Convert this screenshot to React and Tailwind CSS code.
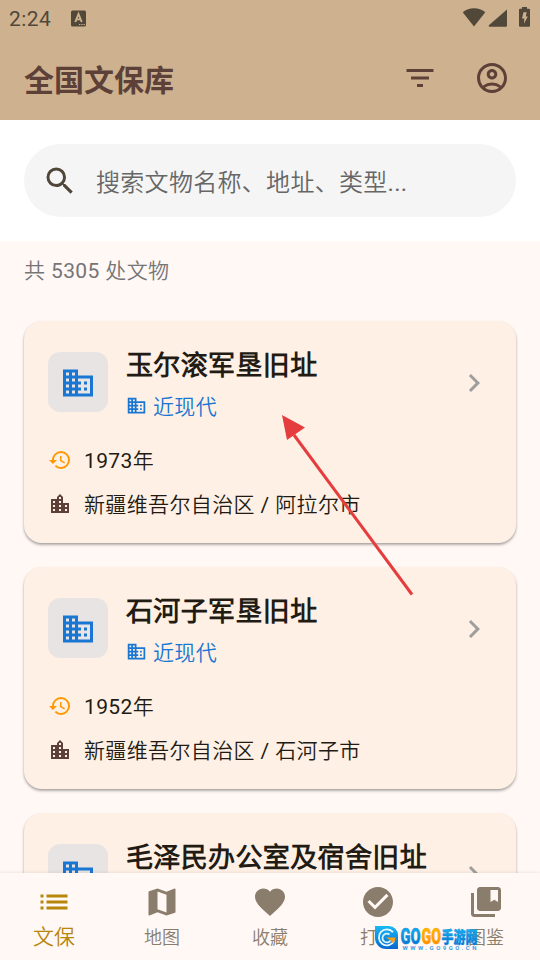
import {
  MdBusiness,
  MdCheckCircle,
  MdChevronRight,
  MdCollectionsBookmark,
  MdFavorite,
  MdFilterList,
  MdHistory,
  MdList,
  MdLocationCity,
  MdMap,
  MdOutlineAccountCircle,
  MdSearch,
} from "react-icons/md";

const sites = [
  { name: "玉尔滚军垦旧址", era: "近现代", year: "1973年", place: "新疆维吾尔自治区 / 阿拉尔市" },
  { name: "石河子军垦旧址", era: "近现代", year: "1952年", place: "新疆维吾尔自治区 / 石河子市" },
  { name: "毛泽民办公室及宿舍旧址" },
];

const tabs = [
  { label: "文保", Icon: MdList, active: true },
  { label: "地图", Icon: MdMap },
  { label: "收藏", Icon: MdFavorite },
  { label: "打卡", Icon: MdCheckCircle },
  { label: "图鉴", Icon: MdCollectionsBookmark },
];

function StatusBar() {
  return (
    <div className="flex h-9 items-center justify-between pl-[9px] pr-2.5 text-[#51483a]">
      <div className="flex items-center gap-5">
        <span className="pt-px text-[21px] leading-9 tracking-[0.4px]">2:24</span>
        <svg width="15" height="17" viewBox="0 0 15 17">
          <rect y="0.5" width="15" height="16" rx="1.5" fill="currentColor" />
          <path d="M4.3 12 7.5 4l3.2 8M5.5 9.4h4" fill="none" stroke="#ceb28f" strokeWidth="1.9" />
          <path d="M8 14.5h1.3M10.3 14.5h1.3M12.6 14.5h1.3" stroke="#ceb28f" strokeWidth="1.2" />
        </svg>
      </div>
      <svg className="-mt-0.5" width="68" height="21" viewBox="0 0 68 21" fill="currentColor">
        <path d="M0.7 5.2C4 2.5 7.6 1.2 12 1.2s8 1.3 11.3 4L12 19.5z" />
        <path d="M45 2.5v16.2a1 1 0 0 1-1 1H27.6c-.9 0-1.2-.8-.7-1.4z" />
        <path d="M60 0h5v1.8h2a1 1 0 0 1 1 1v16a1 1 0 0 1-1 1h-9a1 1 0 0 1-1-1v-16a1 1 0 0 1 1-1h2z" />
        <path d="M61.5 5.3h3.2l-1 4.3h2.1l-3.9 7.2.5-5.3H60z" fill="#ceb28f" />
      </svg>
    </div>
  );
}

function SiteCard({ site }) {
  return (
    <div className="h-[222px] shrink-0 rounded-[18px] bg-[#fff0e5] p-6 shadow-[0_2px_3px_rgba(0,0,0,0.28),0_1px_2px_rgba(0,0,0,0.1)]">
      <div className="flex h-[75px] items-center">
        <div className="-mt-px flex size-[60px] items-center justify-center rounded-xl bg-[#e8e4e3] text-[#1976d2]">
          <MdBusiness size={36} className="mt-0.5" />
        </div>
        <div className="ml-[18px] flex-1 pt-1">
          <div className="text-[27px] font-bold leading-[38px] tracking-[0.375px] text-[#211b13]">{site.name}</div>
          <div className="mt-[7px] flex h-[30px] items-center gap-1.5 text-[#1976d2]">
            {site.era && (
              <>
                <MdBusiness size={21} className="-mt-1" />
                <span className="text-[21px] leading-[30px] tracking-[0.375px]">{site.era}</span>
              </>
            )}
          </div>
        </div>
        <MdChevronRight size={36} className="text-[#9e9e9e]" />
      </div>
      {site.year && (
        <>
          <div className="mt-[25px] flex h-[30px] items-center gap-3">
            <MdHistory size={24} className="text-[#ff9800]" />
            <span className="pt-0.5 text-[21px] leading-[30px] tracking-[0.375px] text-[#211b13]">{site.year}</span>
          </div>
          <div className="mt-3.5 flex h-[30px] items-center gap-3">
            <MdLocationCity size={24} className="-mt-px text-[#5d4037]" />
            <span className="pt-0.5 text-[21px] leading-[30px] tracking-[0.375px] text-[#211b13]">{site.place}</span>
          </div>
        </>
      )}
    </div>
  );
}

function Watermark() {
  return (
    <svg width="106" height="27" viewBox="0 0 106 27">
      <defs>
        <linearGradient id="wm-blue" x1="0" y1="0" x2="0" y2="1">
          <stop offset="0" stopColor="#18b9f2" />
          <stop offset="1" stopColor="#0868cf" />
        </linearGradient>
        <linearGradient id="wm-gold" x1="0" y1="0" x2="0" y2="1">
          <stop offset="0" stopColor="#ffc400" />
          <stop offset="1" stopColor="#ff8500" />
        </linearGradient>
      </defs>
      <path d="M1 1h14a9 9 0 0 1 9 9v14H12A11 11 0 0 1 1 13z" fill="url(#wm-blue)" />
      <path d="M19 7.2A8 8 0 1 0 20 16" fill="none" stroke="#eafaff" strokeWidth="1.8" />
      <path d="M15.5 9.5a4.4 4.4 0 1 0 1 6" fill="none" stroke="#d5f3ff" strokeWidth="1.8" />
      <path d="M12 12.5h9.5c0 2.5-1 4.5-3 5.5l-2-2.7z" fill="#ff9d13" />
      <g className="font-[Roboto,'Noto_Sans_CJK_SC',sans-serif] font-black" strokeWidth="0.5">
        <text x="26.5" y="18.5" fontSize="22" textLength="20" lengthAdjust="spacingAndGlyphs" fill="url(#wm-blue)" stroke="#0b8fe0">GO</text>
        <text x="47.5" y="18.5" fontSize="22" textLength="19.5" lengthAdjust="spacingAndGlyphs" fill="url(#wm-gold)" stroke="#ffa000">GO</text>
        <text x="67.5" y="17.5" fontSize="16" textLength="36" lengthAdjust="spacingAndGlyphs" fill="url(#wm-blue)" stroke="#0b8fe0">手游网</text>
      </g>
      <text x="28.5" y="24.8" fontSize="6" textLength="74" className="font-[Roboto,sans-serif] font-bold" fill="#3c9ee5">WWW.GO9GO.CN</text>
    </svg>
  );
}

export default function App() {
  return (
    <div className="relative flex h-[960px] w-[540px] flex-col overflow-hidden bg-[#fff8f5] font-[Roboto,'Noto_Sans_CJK_SC_DemiLight','Noto_Sans_CJK_SC_Light','Noto_Sans_CJK_SC',sans-serif]">
      <header className="h-[120px] shrink-0 bg-[#ceb28f]">
        <StatusBar />
        <div className="flex h-[84px] items-center pl-6 pr-[30px] text-[#5d4037]">
          <h1 className="flex-1 pt-1.5 font-[Roboto,'Noto_Sans_CJK_SC',sans-serif] text-[30px] font-bold leading-10">全国文保库</h1>
          <MdFilterList size={36} className="mr-9" />
          <MdOutlineAccountCircle size={36} />
        </div>
      </header>

      <div className="h-[121px] shrink-0 bg-white px-6 pt-6">
        <div className="flex h-[73px] items-center rounded-full bg-[#f5f5f5] pl-[18px]">
          <MdSearch size={36} className="text-[#4f4539]" />
          <span className="ml-[18px] pt-[5px] text-[24px] leading-9 tracking-[0.3px] text-[#666]">搜索文物名称、地址、类型...</span>
        </div>
      </div>

      <main className="flex min-h-0 flex-1 flex-col gap-6 overflow-hidden px-6">
        <div className="mb-2 h-12 shrink-0 pt-[15px] text-[21px] leading-[30px] tracking-[0.375px] text-[#757575]">共 5305 处文物</div>
        {sites.map((site) => (
          <SiteCard key={site.name} site={site} />
        ))}
      </main>

      <nav className="z-10 grid h-[87px] shrink-0 grid-cols-5 bg-[#fff8f5] shadow-[0_-1px_3px_rgba(0,0,0,0.07)]">
        {tabs.map(({ label, Icon, active }) => (
          <div key={label} className={`flex flex-col items-center pt-[11px] ${active ? "text-[#b8860b]" : "text-[#8b7d6b]"}`}>
            <Icon size={36} />
            <span className={active ? "text-[21px] leading-[34px]" : "pt-px text-[18px] leading-[34px]"}>{label}</span>
          </div>
        ))}
      </nav>

      {/* pointer drawn over the list */}
      <svg className="absolute left-[280px] top-[412px] z-20" width="136" height="186" viewBox="0 0 136 186" fill="#e53d3d">
        <path d="M14 23 132 182.5" stroke="#e53d3d" strokeWidth="3" />
        <path d="M2 3 25 15.5 7 28z" />
      </svg>
      <div className="absolute left-[374px] top-[925px] z-20">
        <Watermark />
      </div>
    </div>
  );
}
